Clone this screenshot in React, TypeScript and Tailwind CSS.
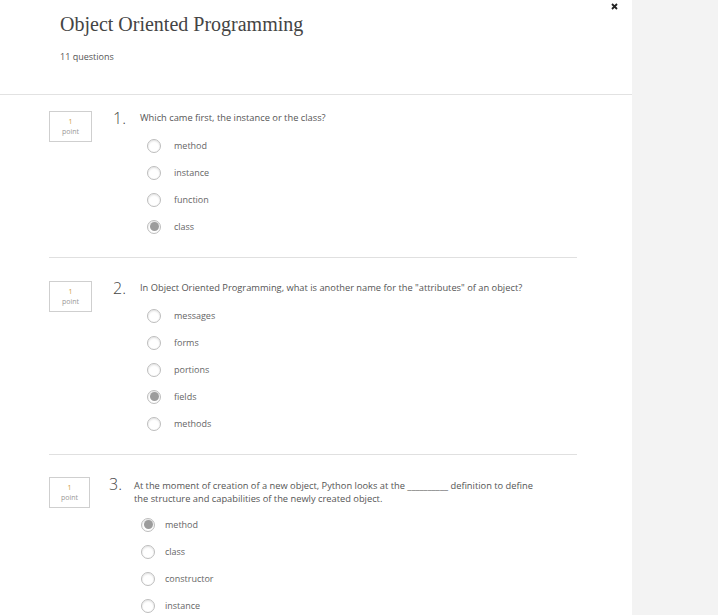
const questions = [
  {
    n: 1,
    text: ["Which came first, the instance or the class?"],
    options: ["method", "instance", "function", "class"],
    picked: 3,
  },
  {
    n: 2,
    text: ['In Object Oriented Programming, what is another name for the "attributes" of an object?'],
    options: ["messages", "forms", "portions", "fields", "methods"],
    picked: 3,
  },
  {
    n: 3,
    text: [
      "At the moment of creation of a new object, Python looks at the __________ definition to define",
      "the structure and capabilities of the newly created object.",
    ],
    options: ["method", "class", "constructor", "instance"],
    picked: 0,
  },
];

const Radio = ({ checked }: { checked: boolean }) => (
  <span className="flex h-[14px] w-[14px] shrink-0 items-center justify-center rounded-full border border-[#bdbdbd] bg-white shadow-[inset_0_1px_2px_rgba(0,0,0,0.12)]">
    {checked && <span className="h-[9px] w-[9px] rounded-full bg-[#9c9c9c]" />}
  </span>
);

const Question = ({ q, last }: { q: (typeof questions)[number]; last: boolean }) => {
  const wide = q.n === 3;
  return (
    <div className={last ? "pt-[22px]" : q.n === 1 ? "pt-[16px]" : "pt-[23px]"}>
      <div className="flex">
        {/* points box */}
        <div
          className={`flex h-[31px] shrink-0 flex-col items-center justify-center border border-[#cfcfcf] text-[7px] leading-[10px] ${
            wide ? "w-[41px]" : "w-[43px]"
          }`}
        >
          <span className="text-[#d09a3c]">1</span>
          <span className="text-[#999]">point</span>
        </div>
        <div className={`flex ${wide ? "ml-[19px]" : "ml-[21px]"}`}>
          <div className={`shrink-0 text-[16px] font-light leading-[14px] text-[#444] ${wide ? "w-[25px]" : "w-[27px]"}`}>
            {q.n}.
          </div>
          <div>
            <div className={`text-[9.3px] leading-[13px] text-[#555] ${wide ? "pt-[2px]" : "pt-0"}`}>
              {q.text.map((t) => (
                <div key={t}>{t}</div>
              ))}
            </div>
            <div className={`flex flex-col ${wide ? "ml-[7px] pt-[6px]" : "ml-[7px] pt-[8px]"}`}>
              {q.options.map((o, i) => (
                <div key={o} className="flex h-[27px] items-center">
                  <Radio checked={i === q.picked} />
                  <span className={`text-[9px] text-[#666] ${wide ? "ml-[10px]" : "ml-[13px]"}`}>{o}</span>
                </div>
              ))}
            </div>
          </div>
        </div>
      </div>
      {!last && <div className="mr-[55px] mt-[17px] h-px bg-[#e0e0e0]" />}
    </div>
  );
};

export default function App() {
  return (
    <div className="flex min-h-[615px] w-full font-['Open_Sans',sans-serif]">
      <div className="relative w-[632px] shrink-0 bg-white">
        {/* close */}
        <svg className="absolute left-[611px] top-[3px]" width="7" height="7" viewBox="0 0 7 7">
          <path d="M1 1L6 6M6 1L1 6" stroke="#222" strokeWidth="1.8" />
        </svg>
        {/* header */}
        <div className="px-[60px] pt-[11px]">
          <h1 className="font-['Liberation_Serif',serif] text-[20px] leading-[26px] text-[#444]">
            Object Oriented Programming
          </h1>
          <p className="mt-[14px] text-[9px] leading-[12px] text-[#555]">11 questions</p>
        </div>
        <div className="mt-[31px] h-px bg-[#e2e2e2]" />
        <div className="pl-[49px]">
          {questions.map((q, i) => (
            <Question key={q.n} q={q} last={i === questions.length - 1} />
          ))}
        </div>
      </div>
      <div className="flex-1 bg-[#f3f3f3]" />
    </div>
  );
}
